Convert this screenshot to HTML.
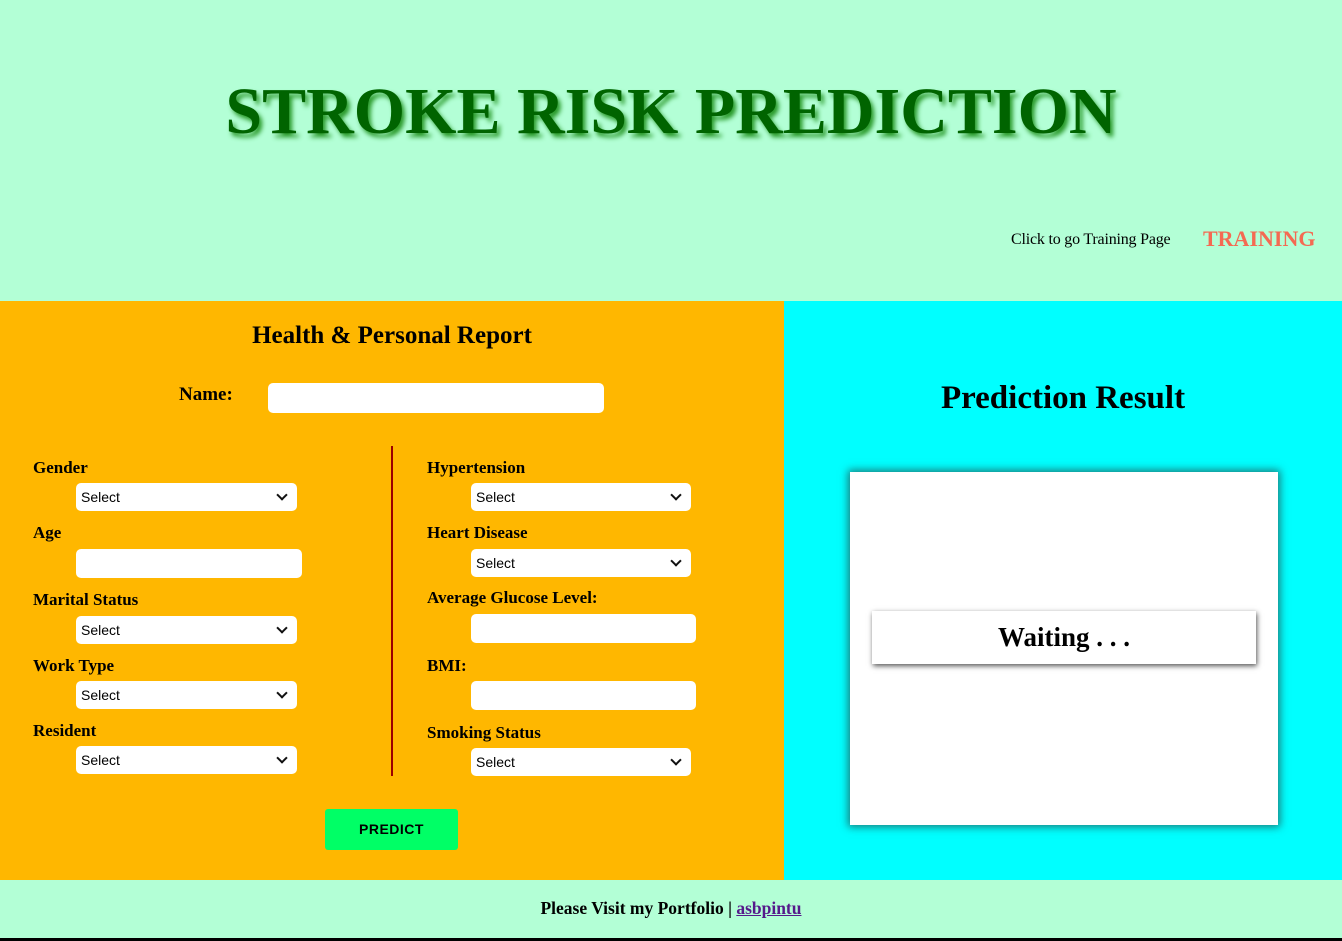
<!DOCTYPE html>
<html><head><style>
*{box-sizing:border-box;margin:0;padding:0}
body{width:1342px;height:941px;background:#b3ffd6;font-family:"Liberation Serif",serif;position:relative;overflow:hidden}
.a{position:absolute}
h1{position:absolute;left:0;width:1342px;top:74px;text-align:center;font-size:66px;color:#006400;font-weight:bold;text-shadow:3px 4px 5px #2a9a2a}
.lbl{position:absolute;font-weight:bold;font-size:17px}
.sel{position:absolute;width:221px;height:28px;background:#fff;border-radius:5px;font-family:"Liberation Sans",sans-serif;font-size:14px;padding:6px 0 0 5px}
.sel:after{content:"";position:absolute;right:11px;top:8px;width:6px;height:6px;border-right:2px solid #111;border-bottom:2px solid #111;transform:rotate(45deg)}
.inp{position:absolute;width:226px;height:29px;background:#fff;border-radius:5px}
</style></head><body>
<h1>STROKE RISK PREDICTION</h1>
<div class="a" style="left:1011px;top:231px;font-size:16px;letter-spacing:-0.2px">Click to go Training Page</div>
<div class="a" style="left:1203px;top:226px;font-size:22px;color:#f46a52;font-weight:bold">TRAINING</div>
<div class="a" style="left:0;top:301px;width:784px;height:579px;background:#ffb700"></div>
<div class="a" style="left:784px;top:301px;width:558px;height:579px;background:#00ffff"></div>
<div class="a" style="left:0;top:322px;width:784px;text-align:center;font-size:25px;font-weight:bold">Health &amp; Personal Report</div>
<div class="lbl" style="left:179px;top:384px;font-size:19px">Name:</div>
<div class="inp" style="left:268px;top:383px;width:336px;height:30px"></div>
<div class="a" style="left:391px;top:446px;width:2px;height:330px;background:#9b0000"></div>
<div class="lbl" style="left:33px;top:458px">Gender</div><div class="sel" style="left:76px;top:483px">Select</div>
<div class="lbl" style="left:33px;top:523px">Age</div><div class="inp" style="left:76px;top:549px"></div>
<div class="lbl" style="left:33px;top:590px">Marital Status</div><div class="sel" style="left:76px;top:616px">Select</div>
<div class="lbl" style="left:33px;top:656px">Work Type</div><div class="sel" style="left:76px;top:681px">Select</div>
<div class="lbl" style="left:33px;top:721px">Resident</div><div class="sel" style="left:76px;top:746px">Select</div>
<div class="lbl" style="left:427px;top:458px">Hypertension</div><div class="sel" style="left:471px;top:483px;width:220px">Select</div>
<div class="lbl" style="left:427px;top:523px">Heart Disease</div><div class="sel" style="left:471px;top:549px;width:220px">Select</div>
<div class="lbl" style="left:427px;top:588px">Average Glucose Level:</div><div class="inp" style="left:471px;top:614px;width:225px"></div>
<div class="lbl" style="left:427px;top:656px">BMI:</div><div class="inp" style="left:471px;top:681px;width:225px"></div>
<div class="lbl" style="left:427px;top:723px">Smoking Status</div><div class="sel" style="left:471px;top:748px;width:220px">Select</div>
<div class="a" style="left:325px;top:809px;width:133px;height:41px;background:#00ff66;border-radius:3px;text-align:center;line-height:41px;font-family:'Liberation Sans',sans-serif;font-weight:bold;font-size:14px;letter-spacing:0.5px">PREDICT</div>
<div class="a" style="left:784px;top:380px;width:558px;text-align:center;font-size:33px;font-weight:bold">Prediction Result</div>
<div class="a" style="left:850px;top:472px;width:428px;height:353px;background:#fff;box-shadow:0 0 8px 2px #1a7a7a"></div>
<div class="a" style="left:872px;top:611px;width:384px;height:53px;background:#fff;box-shadow:1px 2px 5px #555;text-align:center;font-size:27px;font-weight:bold;line-height:53px">Waiting . . .</div>
<div class="a" style="left:0;top:898px;width:1342px;text-align:center;font-size:17.5px;font-weight:bold">Please Visit my Portfolio | <span style="color:#551a8b;text-decoration:underline">asbpintu</span></div>
<div class="a" style="left:0;top:938px;width:1342px;height:3px;background:#000"></div>
</body></html>
